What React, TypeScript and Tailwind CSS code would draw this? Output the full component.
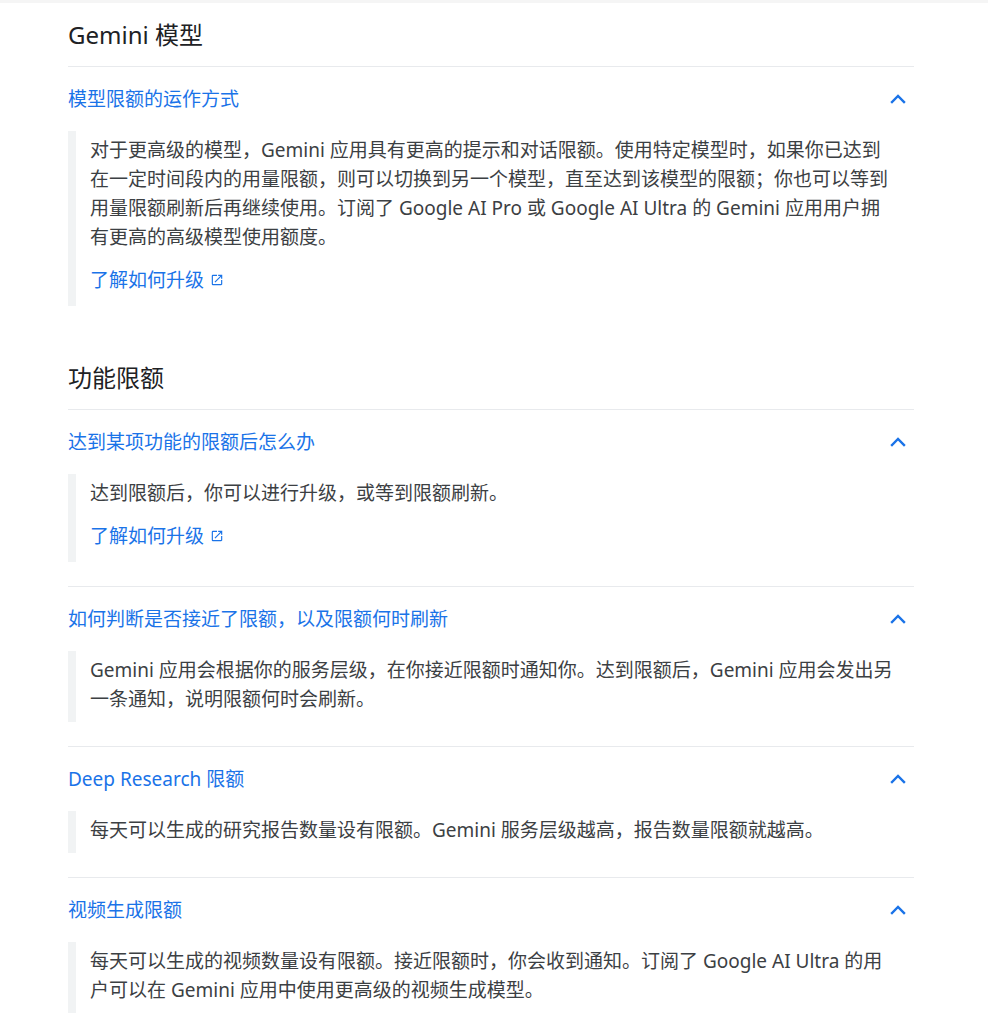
import React from "react";

const Chevron = () => (
  <svg width="24" height="24" viewBox="0 0 24 24" className="text-[#1a73e8]">
    <path d="M6 15l6-6 6 6" fill="none" stroke="currentColor" strokeWidth="2.4" strokeLinecap="square" />
  </svg>
);

const Ext = () => (
  <svg width="14" height="14" viewBox="0 0 24 24" className="inline-block ml-[6px] -mt-[3px]">
    <path d="M19 19H5V5h7V3H5a2 2 0 0 0-2 2v14a2 2 0 0 0 2 2h14c1.1 0 2-.9 2-2v-7h-2v7zM14 3v2h3.59l-9.83 9.83 1.41 1.41L19 6.41V10h2V3h-7z" fill="currentColor" />
  </svg>
);

function Item({ title, children, first }: { title: string; children: React.ReactNode; first?: boolean }) {
  return (
    <div className={first ? "" : "border-t border-[#e8eaed]"}>
      <div className="flex items-center justify-between h-[64px] pr-[4px]">
        <span className="text-[19px] text-[#1a73e8]">{title}</span>
        <Chevron />
      </div>
      <div className="border-l-[8px] border-[#f1f3f4] pl-[14px] pr-[18px] pt-[5px] pb-[8px] mb-[24px] text-[19px] leading-[29px] text-[#3c4043]">
        {children}
      </div>
    </div>
  );
}

const Link = () => (
  <div className="mt-[14px] mb-[3px] text-[#1a73e8]">
    了解如何升级
    <Ext />
  </div>
);

export default function App() {
  return (
    <div className="min-h-[1024px] bg-white border-t-[3px] border-[#f5f5f5]" style={{ fontFamily: '"Noto Sans", "Noto Sans CJK SC", sans-serif' }}>
      <div className="mx-[68px] w-[846px]">
        <h2 className="text-[24px] text-[#202124] h-[64px] flex items-center border-b border-[#e8eaed]">Gemini 模型</h2>
        <Item title="模型限额的运作方式" first>
          <p>对于更高级的模型，Gemini 应用具有更高的提示和对话限额。使用特定模型时，如果你已达到在一定时间段内的用量限额，则可以切换到另一个模型，直至达到该模型的限额；你也可以等到用量限额刷新后再继续使用。订阅了 Google AI Pro 或 Google AI Ultra 的 Gemini 应用用户拥有更高的高级模型使用额度。</p>
          <Link />
        </Item>
        <h2 className="text-[24px] text-[#202124] h-[64px] mt-[40px] flex items-center border-b border-[#e8eaed]">功能限额</h2>
        <Item title="达到某项功能的限额后怎么办" first>
          <p>达到限额后，你可以进行升级，或等到限额刷新。</p>
          <Link />
        </Item>
        <Item title="如何判断是否接近了限额，以及限额何时刷新">
          <p>Gemini 应用会根据你的服务层级，在你接近限额时通知你。达到限额后，Gemini 应用会发出另一条通知，说明限额何时会刷新。</p>
        </Item>
        <Item title="Deep Research 限额">
          <p>每天可以生成的研究报告数量设有限额。Gemini 服务层级越高，报告数量限额就越高。</p>
        </Item>
        <Item title="视频生成限额">
          <p>每天可以生成的视频数量设有限额。接近限额时，你会收到通知。订阅了 Google AI Ultra 的用户可以在 Gemini 应用中使用更高级的视频生成模型。</p>
        </Item>
      </div>
    </div>
  );
}
